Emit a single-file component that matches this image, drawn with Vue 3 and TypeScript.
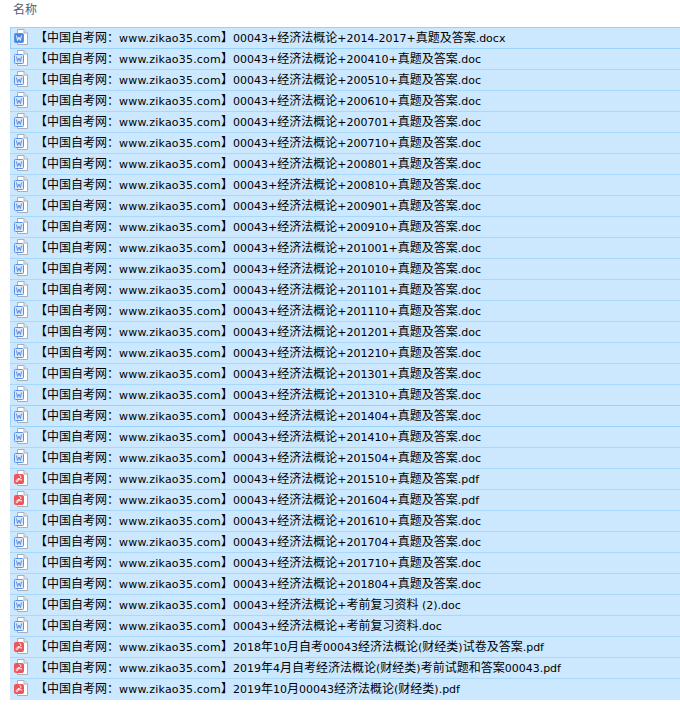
<script setup lang="ts">
interface Row { name: string; kind: 'doc' | 'pdf'; filled?: boolean; focus?: boolean }
interface Run { text: string; latin: boolean }
const prefix = '【中国自考网\uFF1Awww.zikao35.com】'
const base = '00043+经济法概论+'
const tail = '+真题及答案'
const codes1 = ['200410','200510','200610','200701','200710','200801','200810','200901','200910','201001','201010','201101','201110','201201','201210','201301','201310','201404','201410','201504']
const rows: Row[] = [
  { name: base + '2014-2017' + tail + '.docx', kind: 'doc', filled: true, focus: true },
  ...codes1.map((c): Row => ({ name: base + c + tail + '.doc', kind: 'doc', focus: c === '201404' })),
  ...['201510','201604'].map((c): Row => ({ name: base + c + tail + '.pdf', kind: 'pdf' })),
  ...['201610','201704','201710','201804'].map((c): Row => ({ name: base + c + tail + '.doc', kind: 'doc' })),
  { name: base + '考前复习资料 (2).doc', kind: 'doc' },
  { name: base + '考前复习资料.doc', kind: 'doc' },
  { name: '2018年10月自考00043经济法概论(财经类)试卷及答案.pdf', kind: 'pdf' },
  { name: '2019年4月自考经济法概论(财经类)考前试题和答案00043.pdf', kind: 'pdf' },
  { name: '2019年10月00043经济法概论(财经类).pdf', kind: 'pdf' },
]
function runs(s: string): Run[] {
  return s.split(/([\x20-\x7e]+)/).filter(Boolean).map((text) => ({ text, latin: /^[\x20-\x7e]/.test(text) }))
}
</script>

<template>
  <div class="page">
    <div class="header">名称</div>
    <ul class="list">
      <li v-for="(r, i) in rows" :key="i" class="row" :class="{ focus: r.focus }">
        <svg class="icon" width="15" height="16" viewBox="0 0 15 16">
          <path d="M3.5 .5H10L13.5 4V15.5H3.5Z" fill="#fff" stroke="#a9aeb8"/>
          <path d="M10 .5V4H13.5" fill="#e6e9ee" stroke="#a9aeb8"/>
          <template v-if="r.kind === 'doc'">
            <rect x=".5" y="4.5" width="9" height="9" rx="1" :fill="r.filled ? '#4a86e0' : '#dbe8fa'" stroke="#5a92e6"/>
            <path d="M2.4 6.5 3.6 11.5 5 8 6.4 11.5 7.6 6.5" fill="none" :stroke="r.filled ? '#fff' : '#4a86e0'" stroke-width=".9"/>
          </template>
          <template v-else>
            <rect x="0" y="4" width="10" height="10" rx="2" fill="#ee5459"/>
            <path d="M5.3 5.3C7.3 5.3 7.3 8.6 5.3 8.6H4V10.4C4 12.2 2 12.2 2 10.8 2 9.6 5 9.4 8.2 10" fill="none" stroke="#fff" stroke-width="1"/>
          </template>
        </svg>
        <span class="name"><span v-for="(p, j) in runs(prefix + r.name)" :key="j" :class="{ latin: p.latin }">{{ p.text }}</span></span>
      </li>
    </ul>
  </div>
</template>

<style scoped>
.page {
  width: 680px;
  height: 706px;
  background: #fff;
  overflow: hidden;
  font-family: "Noto Sans CJK SC", sans-serif;
  font-size: 12px;
  color: #000;
}
.header {
  height: 27px;
  box-sizing: border-box;
  padding: 1px 0 0 13px;
  line-height: 16px;
  color: #4c607a;
}
.list {
  list-style: none;
  margin: 0 0 0 10px;
  padding: 0 0 1px;
  background: #cce8ff;
}
.row {
  height: 21px;
  box-sizing: border-box;
  background: #cce8ff;
  border-top: 1px solid #a9d8fd;
  display: flex;
  align-items: flex-start;
  padding: 1px 0 0 4px;
}
.row.focus {
  border-top-color: #99d1ff;
  box-shadow: inset 1px 0 0 #99d1ff, 0 1px 0 #99d1ff;
  position: relative;
}
.icon {
  flex: none;
}
.name {
  margin: -2px 0 0 6px;
  white-space: pre;
  line-height: 20px;
}
.latin {
  font-family: "DejaVu Sans", sans-serif;
  font-size: 11px;
}
.latin:nth-child(2) {
  letter-spacing: .2px;
}
</style>
